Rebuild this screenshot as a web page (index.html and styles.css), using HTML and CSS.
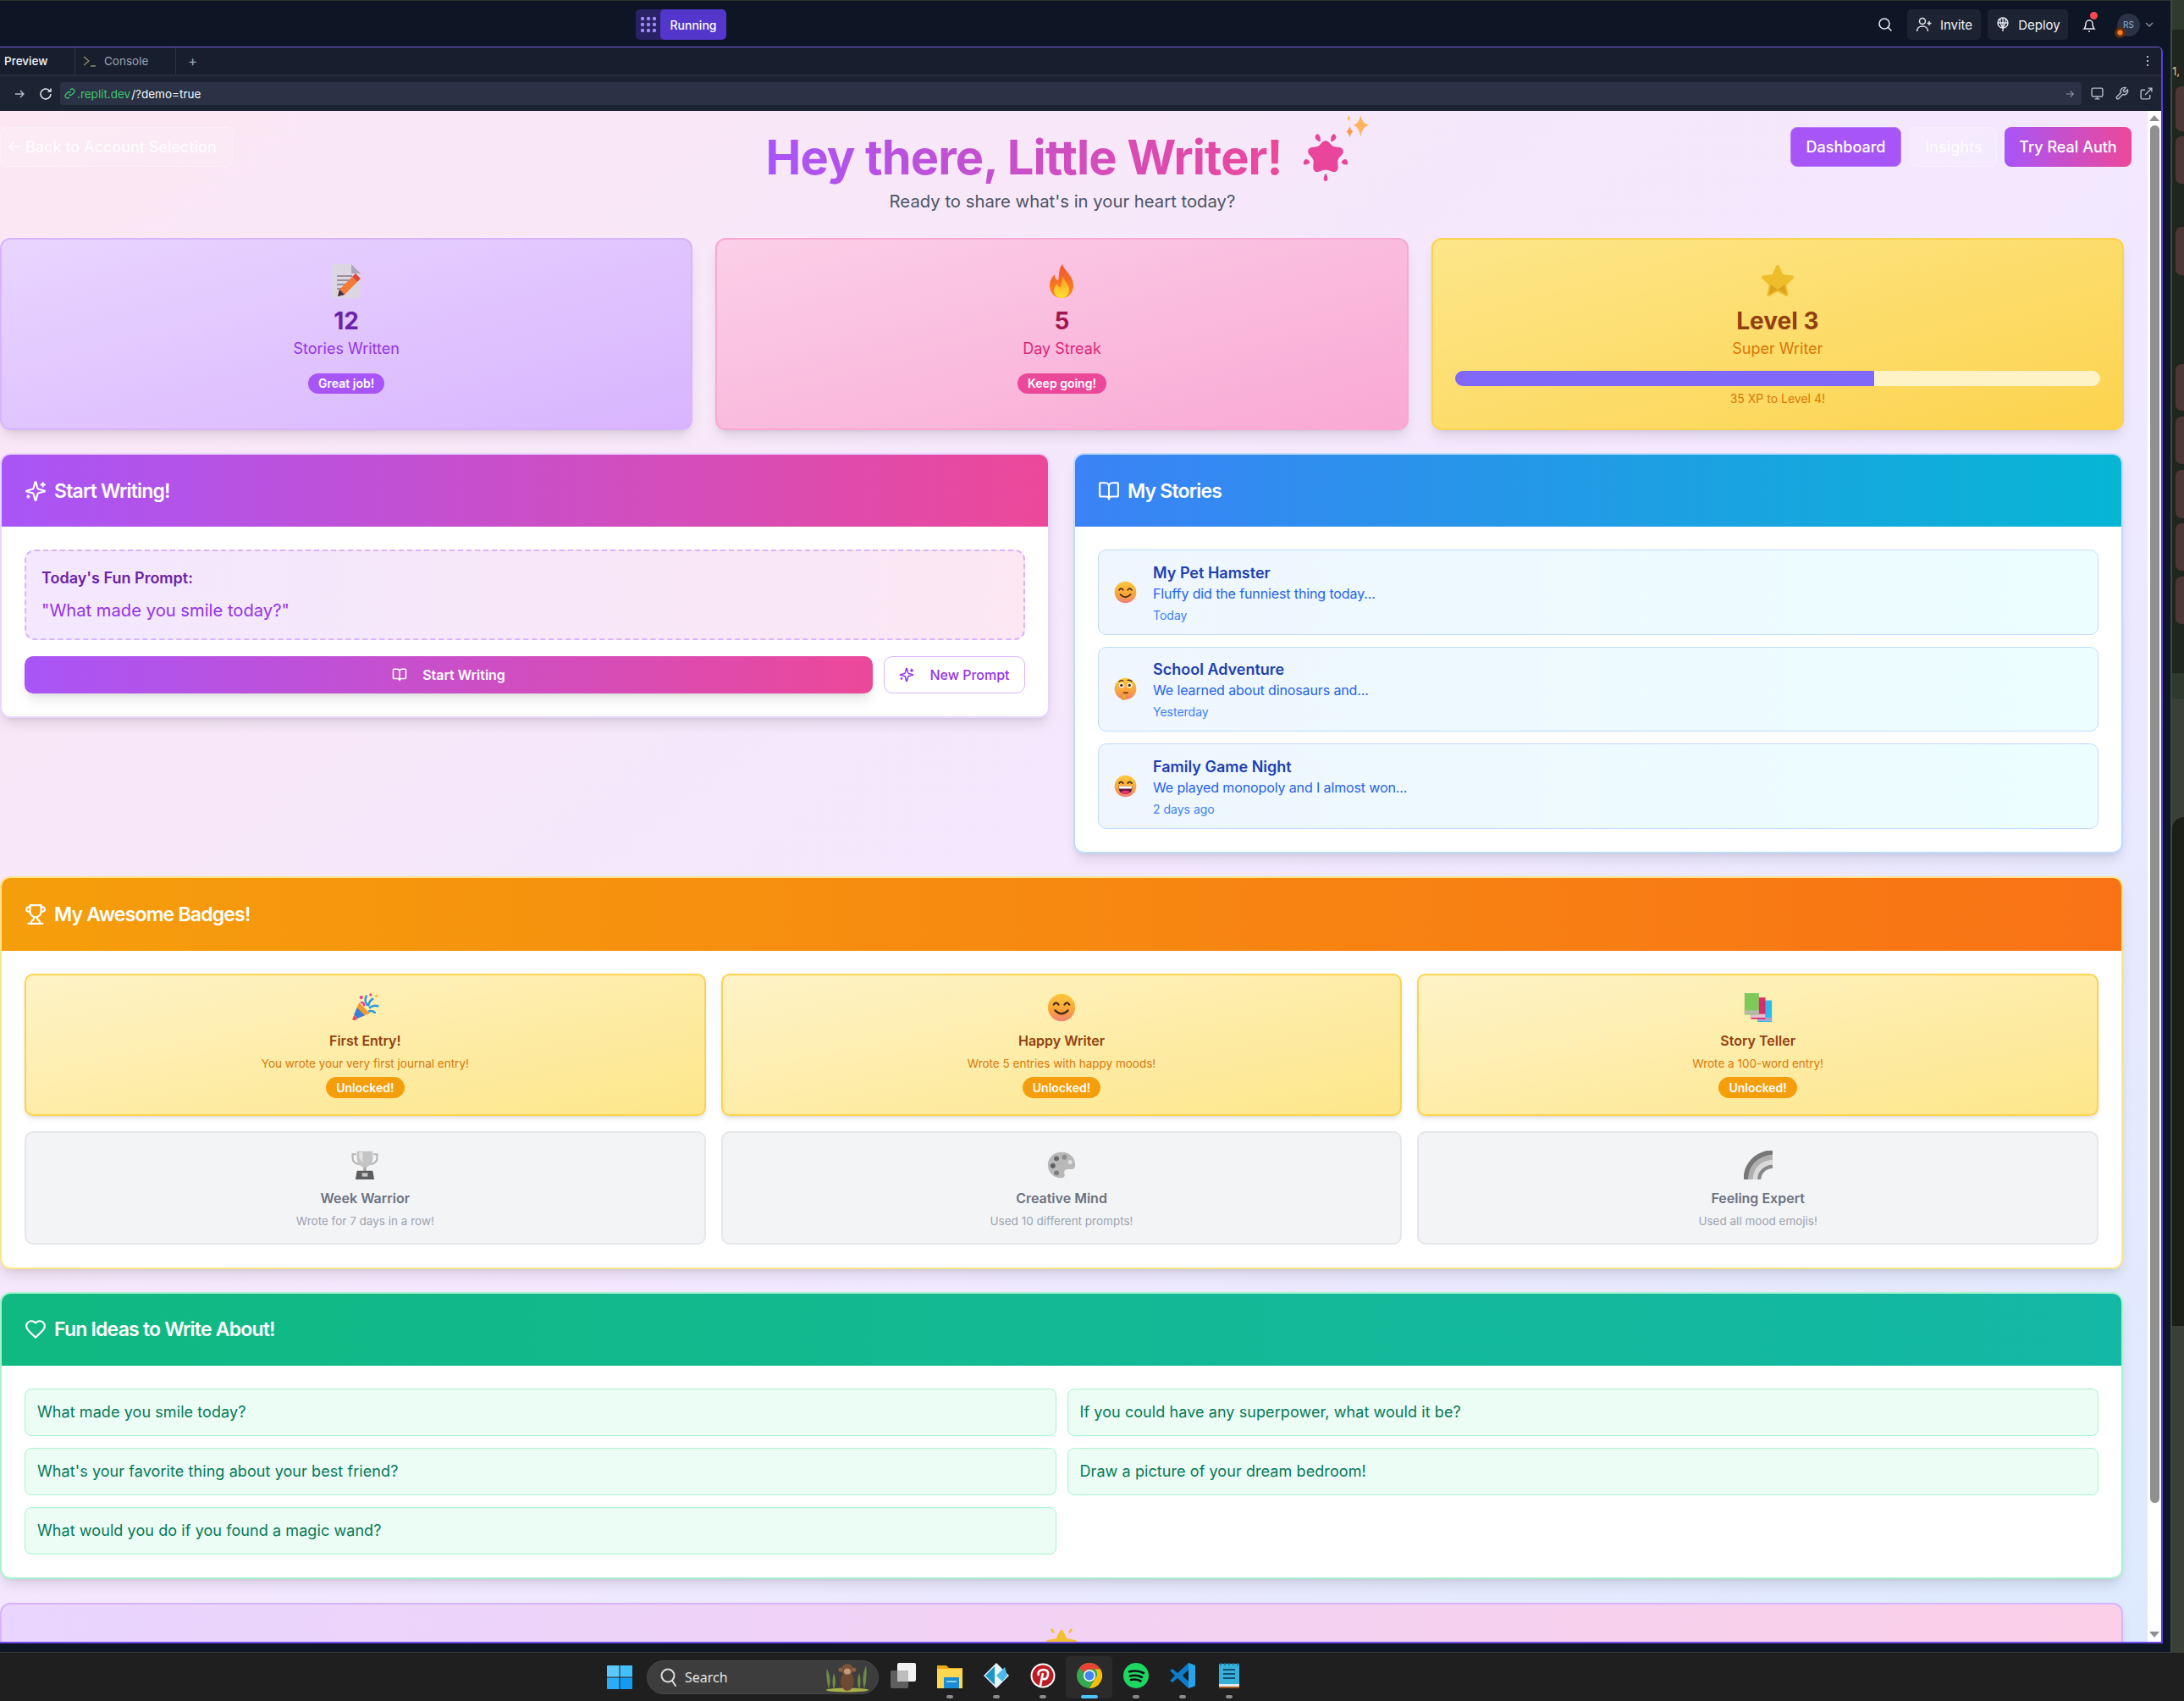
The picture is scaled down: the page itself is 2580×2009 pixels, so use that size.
FILE: index.html
```html
<!DOCTYPE html>
<html lang="en">
<head>
  <meta charset="UTF-8">
  <title>Little Writer</title>
  <link rel="stylesheet" href="styles.css">
</head>
<body>
  <svg class="defs" width="0" height="0">
    <defs>
      <linearGradient id="faceFill" x1="0" y1="0" x2="0" y2="1">
        <stop offset="0" stop-color="#fcc93c"/>
        <stop offset="0.65" stop-color="#f9a13a"/>
        <stop offset="1" stop-color="#f0807a"/>
      </linearGradient>
      <linearGradient id="flameFill" x1="0" y1="0" x2="0" y2="1">
        <stop offset="0" stop-color="#f0562c"/>
        <stop offset="1" stop-color="#fb8a1e"/>
      </linearGradient>
      <linearGradient id="flameCore" x1="0" y1="0" x2="0" y2="1">
        <stop offset="0" stop-color="#fb9a22"/>
        <stop offset="1" stop-color="#ffe236"/>
      </linearGradient>
      <symbol id="e-smile" viewBox="0 0 40 40">
        <circle cx="20" cy="20" r="19" fill="url(#faceFill)"/>
        <path d="M9 16q3.5-5 7 0M24 16q3.5-5 7 0M11 24q9 9 18 0" fill="none" stroke="#4b2a1a" stroke-width="2.6" stroke-linecap="round"/>
      </symbol>
      <symbol id="e-think" viewBox="0 0 40 40">
        <circle cx="20" cy="20" r="19" fill="url(#faceFill)"/>
        <circle cx="13" cy="14" r="4.4" fill="#fff"/><circle cx="27" cy="14" r="4.4" fill="#fff"/>
        <circle cx="13" cy="14" r="2.4" fill="#3a2414"/><circle cx="27" cy="14" r="2.4" fill="#3a2414"/>
        <path d="M9 7q4-2.500 7-1M24 5q4-1 7 2M17 27h7" fill="none" stroke="#4b2a1a" stroke-width="2" stroke-linecap="round"/>
        <path d="M14 39q-3-7 1-10l5-1q3 3 2 6l-3 5z" fill="#f2a33a" stroke="#d97f28"/>
      </symbol>
      <symbol id="e-grin" viewBox="0 0 40 40">
        <circle cx="20" cy="20" r="19" fill="url(#faceFill)"/>
        <path d="M9 15q3.500-5 7 0M24 15q3.500-5 7 0" fill="none" stroke="#4b2a1a" stroke-width="2.6" stroke-linecap="round"/>
        <path d="M8 20h24q0 14-12 14T8 20z" fill="#5b1a4a"/>
        <path d="M8.500 20h23q0 3-1 4.500h-21q-1-1.500-1-4.500z" fill="#fff"/>
        <path d="M12 30q8-5 16 0-3 4-8 4t-8-4z" fill="#e8306e"/>
      </symbol>
      <symbol id="e-trophy" viewBox="0 0 40 40">
        <path d="M8 5H3v5q0 7 9 9M32 5h5v5q0 7-9 9" fill="none" stroke="#b5b5b5" stroke-width="2.500"/>
        <path d="M9 1h22v10q0 10-11 13Q9 21 9 11z" fill="#c4c4c4"/>
        <path d="M12 2h5v14q-5-3-5-8z" fill="#e3e3e3"/>
        <rect x="18" y="23" width="4" height="7" fill="#a8a8a8"/>
        <path d="M9 28h22l2 12H7z" fill="#5d5d5d"/>
        <rect x="16" y="31" width="8" height="5" fill="#c8c8c8"/>
      </symbol>
      <symbol id="e-palette" viewBox="0 0 40 40">
        <path d="M20 2C9 2 1 10 1 20c0 10 8 18 18 18 5 0 6-3 5-6-1-4 1-6 5-6h5c3 0 5-2 5-6C39 9 31 2 20 2z" fill="#b8b8b8"/>
        <circle cx="13" cy="11" r="3.500" fill="#666"/><circle cx="24" cy="9" r="3.500" fill="#8c8c8c"/>
        <circle cx="8" cy="21" r="3.500" fill="#5d5d5d"/><circle cx="32" cy="16" r="3" fill="#dedede"/>
        <circle cx="13" cy="31" r="3.500" fill="#7d7d7d"/>
      </symbol>
      <symbol id="e-rainbow" viewBox="0 0 40 40">
        <path d="M3 40C3 20 16 5 40 2" fill="none" stroke="#777" stroke-width="7"/>
        <path d="M9.500 40C9.500 24 20 11 40 9" fill="none" stroke="#b0b0b0" stroke-width="7"/>
        <path d="M16 40C16 28 24 17 40 16" fill="none" stroke="#d9d9d9" stroke-width="6"/>
        <path d="M21.500 40C21.500 31 28 23 40 22" fill="none" stroke="#888" stroke-width="5"/>
      </symbol>
      <symbol id="i-sparkles" viewBox="0 0 24 24">
        <path d="M9.900 15.500a2 2 0 0 0-1.400-1.400l-6.100-1.600a.5.5 0 0 1 0-1l6.100-1.600a2 2 0 0 0 1.400-1.400l1.600-6.100a.5.5 0 0 1 1 0l1.600 6.100a2 2 0 0 0 1.400 1.400l6.100 1.600a.5.5 0 0 1 0 1l-6.100 1.600a2 2 0 0 0-1.400 1.400l-1.600 6.100a.5.5 0 0 1-1 0z" fill="none" stroke="currentColor" stroke-width="2" stroke-linejoin="round"/>
        <path d="M20 3v4M22 5h-4M4 17v2M5 18H3" fill="none" stroke="currentColor" stroke-width="2" stroke-linecap="round"/>
      </symbol>
      <symbol id="i-book" viewBox="0 0 24 24">
        <path d="M12 7v14M3 18a1 1 0 0 1-1-1V4a1 1 0 0 1 1-1h5a4 4 0 0 1 4 4 4 4 0 0 1 4-4h5a1 1 0 0 1 1 1v13a1 1 0 0 1-1 1h-6a3 3 0 0 0-3 3 3 3 0 0 0-3-3z" fill="none" stroke="currentColor" stroke-width="2" stroke-linecap="round" stroke-linejoin="round"/>
      </symbol>
    </defs>
  </svg>

  <div class="screen">
    <div class="app">
      <header class="topbar">
        <div class="run-btn">
          <span class="run-icon">
            <svg width="20" height="20" viewBox="0 0 20 20" fill="#9d8cf5"><circle cx="3" cy="3" r="2.200"/><circle cx="10" cy="3" r="2.200"/><circle cx="17" cy="3" r="2.200"/><circle cx="3" cy="10" r="2.200"/><circle cx="10" cy="10" r="2.200"/><circle cx="17" cy="10" r="2.200"/><circle cx="3" cy="17" r="2.200"/><circle cx="10" cy="17" r="2.200"/><circle cx="17" cy="17" r="2.200"/></svg>
          </span>
          <span class="run-label">Running</span>
        </div>
        <div class="top-actions">
          <svg class="top-search" width="18" height="18" viewBox="0 0 18 18" fill="none" stroke="#e4e7ee" stroke-width="1.600"><circle cx="8" cy="8" r="6"/><path d="M12.500 12.500 16 16" stroke-linecap="round"/></svg>
          <div class="top-btn invite-btn">
            <svg width="20" height="18" viewBox="0 0 20 18" fill="none" stroke="#e4e7ee" stroke-width="1.500"><circle cx="8" cy="5" r="3.500"/><path d="M1.500 17c0-4 3-6 6.500-6s6.500 2 6.500 6M16 5v5M13.500 7.500h5"/></svg>
            <span>Invite</span>
          </div>
          <div class="top-btn deploy-btn">
            <svg width="18" height="18" viewBox="0 0 18 18" fill="none" stroke="#e4e7ee" stroke-width="1.400"><circle cx="9" cy="7" r="6"/><path d="M3 7h12M9 1v12M6 2q-1 5 3 11 4-6 3-11M9 13v4"/></svg>
            <span>Deploy</span>
          </div>
          <div class="bell">
            <svg width="18" height="20" viewBox="0 0 18 20" fill="none" stroke="#e4e7ee" stroke-width="1.500"><path d="M3 15q2-2 2-6a4 4 0 0 1 8 0q0 4 2 6zM8 18h2"/></svg>
            <span class="bell-dot"></span>
          </div>
          <div class="avatar">RS<span class="avatar-spark"></span></div>
          <svg class="chevron" width="10" height="6" viewBox="0 0 10 6" fill="none" stroke="#8c93a6" stroke-width="1.300"><path d="M1 1l4 4 4-4"/></svg>
        </div>
      </header>

      <div class="preview">
        <div class="tabs">
          <div class="tab tab-active">Preview</div>
          <div class="tab tab-console">
            <svg width="16" height="14" viewBox="0 0 16 14" fill="none" stroke="#8d8f6a" stroke-width="1.300"><path d="M1 2l6 5-6 5M9 13h6"/></svg>
            <span>Console</span>
          </div>
          <div class="tab-add">+</div>
          <div class="tab-more"><i></i><i></i><i></i></div>
        </div>
        <div class="urlbar">
          <svg class="nav-icon" width="14" height="14" viewBox="0 0 14 14" fill="none" stroke="#b6bcc9" stroke-width="1.400"><path d="M2 7h10M8 3l4 4-4 4"/></svg>
          <svg class="nav-icon" width="16" height="16" viewBox="0 0 16 16" fill="none" stroke="#e4e7ee" stroke-width="1.500"><path d="M14 8a6 6 0 1 1-2-4.500L14 5M14 1.500V5h-3.500"/></svg>
          <div class="url-field">
            <svg width="13" height="13" viewBox="0 0 24 24" fill="none" stroke="#3ec46d" stroke-width="2.500"><path d="M10 14a5 5 0 0 0 7 0l4-4a5 5 0 0 0-7-7l-1 1M14 10a5 5 0 0 0-7 0l-4 4a5 5 0 0 0 7 7l1-1"/></svg>
            <span class="url-host">.replit.dev</span><span class="url-path">/?demo=true</span>
            <svg class="url-go" width="12" height="12" viewBox="0 0 14 14" fill="none" stroke="#8c93a6" stroke-width="1.400"><path d="M2 7h10M8 3l4 4-4 4"/></svg>
          </div>
          <div class="url-tools">
            <svg width="17" height="17" viewBox="0 0 24 24" fill="none" stroke="#b6bcc9" stroke-width="2"><rect x="3" y="3" width="18" height="14" rx="2"/><path d="M12 17v4M8 21h8"/></svg>
            <svg width="17" height="17" viewBox="0 0 24 24" fill="none" stroke="#b6bcc9" stroke-width="2"><path d="M14.700 6.300a1 1 0 0 0 0 1.400l1.600 1.600a1 1 0 0 0 1.400 0l3.800-3.800a6 6 0 0 1-7.900 7.900l-6.900 6.900a2.100 2.100 0 0 1-3-3l6.900-6.900a6 6 0 0 1 7.900-7.900z"/></svg>
            <svg width="17" height="17" viewBox="0 0 24 24" fill="none" stroke="#b6bcc9" stroke-width="2"><path d="M18 14v5a2 2 0 0 1-2 2H5a2 2 0 0 1-2-2V8a2 2 0 0 1 2-2h5M15 3h6v6M10 14 21 3"/></svg>
          </div>
        </div>

        <div class="viewport">
          <main class="page">
            <section class="hero">
              <div class="hero-left"><button class="ghost-btn back-btn">← Back to Account Selection</button></div>
              <div class="hero-mid">
                <div class="hero-title">
                  <h1>Hey there, Little Writer!</h1>
                  <svg class="hero-splat" width="56" height="58" viewBox="0 0 54 56" fill="#e8459b">
                    <path d="M27 9C31 9 32 13 35 15 39 17 46 15 47 20 48 25 42 27 41 31 40 35 43 41 39 44 36 46 31 42 27 42 23 42 18 46 15 44 11 41 14 35 13 31 12 27 6 25 7 20 8 15 15 17 19 15 22 13 23 9 27 9z"/>
                    <path d="M18 1q4 3 3 9-5-1-6-5 0-3 3-4zM36 1q3 1 3 4-1 4-6 5-1-6 3-9zM4 30q4 0 5 4-3 3-7 2-1-4 2-6zM50 30q3 2 2 6-4 1-7-2 1-4 5-4zM27 46q3 4 2 8-2 2-4 0-1-4 2-8z"/>
                  </svg>
                  <svg class="hero-sparkle" width="30" height="30" viewBox="0 0 28 28">
                    <path d="M18 1q1.500 9 9 11-7.500 2-9 13-1.500-11-8-13 6.500-2 8-11z" fill="#fdb45c"/>
                    <path d="M6 13q1 4.500 4 6-3 1.500-4 7-1-5.500-4-7 3-1.500 4-6z" fill="#fb9a4b"/>
                    <path d="M5 1q.6 2.500 2 3.500-1.400 1-2 3.500-.6-2.500-2-3.500 1.400-1 2-3.500z" fill="#fcc34f"/>
                  </svg>
                </div>
                <p class="hero-sub">Ready to share what's in your heart today?</p>
              </div>
              <nav class="hero-right">
                <button class="solid-btn dash-btn">Dashboard</button>
                <button class="ghost-btn insights-btn">Insights</button>
                <button class="solid-btn auth-btn">Try Real Auth</button>
              </nav>
            </section>

            <section class="stats">
              <div class="stat stat-purple">
                <svg class="stat-emoji" width="40" height="40" viewBox="0 0 40 40">
                  <path d="M3 0h23l11 11v29H3z" fill="#dcd5e2"/><path d="M26 0l11 11H26z" fill="#aea6b8"/>
                  <path d="M9 14h18M9 19h16M9 24h12M9 29h9" stroke="#97919f" stroke-width="2"/>
                  <path d="M10 38l2-8 15-15 6 6-15 15z" fill="#f47a35"/><path d="M27 15l4-4 6 6-4 4z" fill="#e0483b"/><path d="M10 38l2-8 6 6z" fill="#3c3244"/>
                </svg>
                <div class="stat-num">12</div>
                <div class="stat-label">Stories Written</div>
                <span class="pill">Great job!</span>
              </div>
              <div class="stat stat-pink">
                <svg class="stat-emoji" width="40" height="40" viewBox="0 0 40 40">
                  <path d="M21 0c2 8 13 13 13 25 0 9-6 15-14 15S6 34 6 25c0-6 3-10 6-13 0 4 1 6 4 7 2-7 0-13 5-19z" fill="url(#flameFill)"/>
                  <path d="M22 15c1 5 7 8 7 15 0 6-4 10-9 10s-9-4-9-9c0-4 2-6 4-8 1 3 2 4 4 4 1-4 1-8 3-12z" fill="url(#flameCore)"/>
                </svg>
                <div class="stat-num">5</div>
                <div class="stat-label">Day Streak</div>
                <span class="pill">Keep going!</span>
              </div>
              <div class="stat stat-yellow">
                <svg class="stat-emoji" width="40" height="40" viewBox="0 0 40 40">
                  <path d="M20 3l5 11 12 1.500-9 8.500 2.500 12L20 30l-10.500 6L12 24l-9-8.500L15 14z" fill="#eebd2a" stroke="#eebd2a" stroke-width="4" stroke-linejoin="round"/>
                  <path d="M20 30l-10.500 6L12 24l8 6 8-6 2.500 12z" fill="#d9a31f"/>
                </svg>
                <div class="stat-num">Level 3</div>
                <div class="stat-label">Super Writer</div>
                <div class="xp-track"><div class="xp-fill" style="width: 65%"></div></div>
                <div class="xp-note">35 XP to Level 4!</div>
              </div>
            </section>

            <section class="columns">
              <article class="card card-write">
                <h2 class="card-head"><svg width="26" height="26"><use href="#i-sparkles"/></svg>Start Writing!</h2>
                <div class="card-body">
                  <div class="prompt-box">
                    <div class="prompt-title">Today's Fun Prompt:</div>
                    <div class="prompt-text">"What made you smile today?"</div>
                  </div>
                  <div class="write-actions">
                    <button class="start-btn"><svg width="18" height="18"><use href="#i-book"/></svg>Start Writing</button>
                    <button class="new-btn"><svg width="18" height="18"><use href="#i-sparkles"/></svg>New Prompt</button>
                  </div>
                </div>
              </article>

              <article class="card card-stories">
                <h2 class="card-head"><svg width="26" height="26"><use href="#i-book"/></svg>My Stories</h2>
                <div class="card-body story-list">
                  <div class="story">
                    <svg class="story-emoji" width="27" height="27"><use href="#e-smile"/></svg>
                    <div>
                      <div class="story-title">My Pet Hamster</div>
                      <div class="story-text">Fluffy did the funniest thing today...</div>
                      <div class="story-date">Today</div>
                    </div>
                  </div>
                  <div class="story">
                    <svg class="story-emoji" width="27" height="27"><use href="#e-think"/></svg>
                    <div>
                      <div class="story-title">School Adventure</div>
                      <div class="story-text">We learned about dinosaurs and...</div>
                      <div class="story-date">Yesterday</div>
                    </div>
                  </div>
                  <div class="story">
                    <svg class="story-emoji" width="27" height="27"><use href="#e-grin"/></svg>
                    <div>
                      <div class="story-title">Family Game Night</div>
                      <div class="story-text">We played monopoly and I almost won...</div>
                      <div class="story-date">2 days ago</div>
                    </div>
                  </div>
                </div>
              </article>
            </section>

            <article class="card card-badges">
              <h2 class="card-head">
                <svg width="26" height="26" viewBox="0 0 24 24" fill="none" stroke="currentColor" stroke-width="2" stroke-linecap="round" stroke-linejoin="round"><path d="M6 9H4.500a2.500 2.500 0 0 1 0-5H6M18 9h1.500a2.500 2.500 0 0 0 0-5H18M4 22h16M10 14.700V17c0 .6-.5 1-1 1.200-1.200.5-2 2-2 3.800M14 14.700V17c0 .6.500 1 1 1.200 1.200.5 2 2 2 3.800M18 2H6v7a6 6 0 0 0 12 0z"/></svg>
                My Awesome Badges!
              </h2>
              <div class="card-body badge-grid">
                <div class="badge">
                  <svg class="badge-emoji" width="34" height="34" viewBox="0 0 40 40">
                    <path d="M2 38l10-25 15 15z" fill="#f59a2e"/><path d="M5 30l4-10 11 11-10 4z" fill="#3b7fd9"/><path d="M3 36l2-5 5 5-5 2z" fill="#e2486e"/>
                    <path d="M22 4q-3 7 1 12M31 8q-5 3-6 9M38 18q-6-2-11 2M34 27q-3-3-8-2" fill="none" stroke="#2c9ae8" stroke-width="3" stroke-linecap="round"/>
                    <circle cx="15" cy="6" r="2.500" fill="#ef3f8e"/><circle cx="36" cy="4" r="2" fill="#f4c534"/><circle cx="28" cy="2" r="1.800" fill="#ef3f8e"/><path d="M14 13q5-1 5 5" fill="none" stroke="#ef3f8e" stroke-width="3"/>
                  </svg>
                  <div class="badge-title">First Entry!</div>
                  <div class="badge-text">You wrote your very first journal entry!</div>
                  <span class="unlocked">Unlocked!</span>
                </div>
                <div class="badge">
                  <svg class="badge-emoji" width="34" height="34"><use href="#e-smile"/></svg>
                  <div class="badge-title">Happy Writer</div>
                  <div class="badge-text">Wrote 5 entries with happy moods!</div>
                  <span class="unlocked">Unlocked!</span>
                </div>
                <div class="badge">
                  <svg class="badge-emoji" width="34" height="34" viewBox="0 0 40 40">
                    <rect x="19" y="10" width="20" height="30" fill="#2fb8ea"/><rect x="19" y="34" width="20" height="5" fill="#a2a6d8"/>
                    <rect x="10" y="6" width="20" height="30" fill="#d92c6c"/><rect x="10" y="29" width="20" height="5" fill="#e8c0d4"/>
                    <rect x="1" y="0" width="20" height="30" fill="#7fc95a"/><rect x="1" y="24" width="20" height="5" fill="#b8b8ad"/>
                  </svg>
                  <div class="badge-title">Story Teller</div>
                  <div class="badge-text">Wrote a 100-word entry!</div>
                  <span class="unlocked">Unlocked!</span>
                </div>
                <div class="badge badge-locked">
                  <svg class="badge-emoji" width="34" height="34"><use href="#e-trophy"/></svg>
                  <div class="badge-title">Week Warrior</div>
                  <div class="badge-text">Wrote for 7 days in a row!</div>
                </div>
                <div class="badge badge-locked">
                  <svg class="badge-emoji" width="34" height="34"><use href="#e-palette"/></svg>
                  <div class="badge-title">Creative Mind</div>
                  <div class="badge-text">Used 10 different prompts!</div>
                </div>
                <div class="badge badge-locked">
                  <svg class="badge-emoji" width="34" height="34"><use href="#e-rainbow"/></svg>
                  <div class="badge-title">Feeling Expert</div>
                  <div class="badge-text">Used all mood emojis!</div>
                </div>
              </div>
            </article>

            <article class="card card-ideas">
              <h2 class="card-head">
                <svg width="26" height="26" viewBox="0 0 24 24" fill="none" stroke="currentColor" stroke-width="2" stroke-linejoin="round"><path d="M19 14c1.500-1.500 3-3.200 3-5.500A5.500 5.500 0 0 0 16.500 3c-1.800 0-3 .5-4.500 2-1.500-1.500-2.700-2-4.500-2A5.500 5.500 0 0 0 2 8.500c0 2.300 1.500 4 3 5.500l7 7z"/></svg>
                Fun Ideas to Write About!
              </h2>
              <div class="card-body idea-grid">
                <div class="idea">What made you smile today?</div>
                <div class="idea">If you could have any superpower, what would it be?</div>
                <div class="idea">What's your favorite thing about your best friend?</div>
                <div class="idea">Draw a picture of your dream bedroom!</div>
                <div class="idea">What would you do if you found a magic wand?</div>
              </div>
            </article>

            <article class="card card-next">
              <svg class="next-star" width="40" height="40" viewBox="0 0 40 40" fill="#f2c02e">
                <path d="M20 6l5 10 11 2-8 8 2 12-10-5-10 5 2-12-8-8 11-2z" stroke="#f2c02e" stroke-width="4" stroke-linejoin="round"/>
                <path d="M9 2l3 5-2 1-3-4zM31 2l-3 5 2 1 3-4z"/>
              </svg>
            </article>
          </main>

          <div class="scrollbar">
            <span class="arrow-up"></span>
            <div class="scroll-track"><div class="scroll-thumb"></div></div>
            <span class="arrow-down"></span>
          </div>
        </div>
      </div>
      <div class="under-bar"></div>
    </div>

    <aside class="side-sliver">
      <div class="sliver-top"></div>
      <div class="sliver-tabs"><span class="sliver-num">1,</span></div>
      <div class="sliver-diff">
        <span class="blob blob-a"></span>
        <span class="blob blob-b"></span>
        <span class="blob blob-c"></span>
        <span class="blob blob-d"></span>
        <span class="blob blob-e"></span>
        <span class="blob blob-f"></span>
        <span class="blob blob-g"></span>
        <span class="blob blob-h"></span>
      </div>
      <div class="sliver-band"></div>
      <div class="sliver-panel"><div class="sliver-dark"></div></div>
    </aside>
  </div>

  <footer class="taskbar">
    <svg class="task-win" width="30" height="30" viewBox="0 0 30 30">
      <path d="M1 1h13.500v13.500H0V2a1 1 0 0 1 1-1z" fill="#5cc8fb"/><path d="M15.500 1H29a1 1 0 0 1 1 1v12.500H15.500z" fill="#43c0fb"/>
      <path d="M0 15.500h14.500V29H1a1 1 0 0 1-1-1z" fill="#2bacf6"/><path d="M15.500 15.500H30V28a1 1 0 0 1-1 1H15.500z" fill="#139bf3"/>
    </svg>
    <div class="task-search">
      <svg width="22" height="24" viewBox="0 0 22 24" fill="none" stroke="#dcdcdc" stroke-width="2"><circle cx="10" cy="10" r="7.500"/><path d="M15 16l4 6" stroke-linecap="round"/></svg>
      <span>Search</span>
      <svg class="task-monkey" width="60" height="36" viewBox="0 0 60 36">
        <ellipse cx="30" cy="33" rx="25" ry="2.500" fill="#a8b04a"/>
        <path d="M8 32q-4-14-2-24 6 12 2 24zM14 33q-3-10 0-20 4 10 0 20zM50 32q4-14 2-28-6 14-2 28zM44 33q3-10 0-20-4 10 0 20z" fill="#6f8c45"/>
        <ellipse cx="30" cy="23" rx="8" ry="11" fill="#6e4a32"/>
        <circle cx="30" cy="9" r="7" fill="#7a5238"/><circle cx="22" cy="9" r="2.500" fill="#8a6146"/><circle cx="38" cy="9" r="2.500" fill="#8a6146"/>
        <ellipse cx="30" cy="11" rx="4" ry="3.500" fill="#c49a7c"/>
      </svg>
    </div>
    <div class="task-apps">
      <div class="task-app">
        <svg width="30" height="30" viewBox="0 0 30 30"><rect x="0" y="9" width="21" height="21" rx="2" fill="#5e5e5e"/><rect x="8" y="0" width="22" height="22" rx="2" fill="#f3f3f3"/><rect x="8" y="9" width="13" height="13" fill="#bdbdbd"/></svg>
      </div>
      <div class="task-app has-dot">
        <svg width="30" height="30" viewBox="0 0 30 30"><path d="M0 3h11l3 3h16v24H0z" fill="#e8a913"/><rect x="0" y="7" width="30" height="23" fill="#fbd651"/><rect x="8" y="17" width="18" height="13" rx="1" fill="#1a8cd8"/><rect x="11" y="21" width="12" height="2" fill="#8fd0f5"/></svg>
      </div>
      <div class="task-app has-dot">
        <svg width="30" height="30" viewBox="0 0 30 30"><path d="M15 0 30 15 15 30 0 15z" fill="#e8f6fb"/><path d="M13 4v22L2 15z" fill="#1f95c8"/><path d="M15 15 25 5l3 10-6 7z" fill="#4cb9e6"/></svg>
      </div>
      <div class="task-app has-dot">
        <svg width="30" height="30" viewBox="0 0 30 30"><circle cx="15" cy="15" r="14.500" fill="#fff"/><circle cx="15" cy="15" r="12.500" fill="#bd1c24"/><path d="M12 27l3-15M10 15q-2-6 5-7 7 0 6 6-1 6-5 5-2-.5-2-2" fill="none" stroke="#fff" stroke-width="2.600"/></svg>
      </div>
      <div class="task-app is-active">
        <svg width="30" height="30" viewBox="0 0 30 30"><circle cx="15" cy="15" r="15" fill="#34a853"/><path d="M15 0a15 15 0 0 1 13 7.500H15A7.500 7.500 0 0 0 8 12L3.500 5.500A15 15 0 0 1 15 0z" fill="#ea4335"/><path d="M28 7.500A15 15 0 0 1 15 30l6.500-11a7.500 7.500 0 0 0 0-11.500z" fill="#fbbc05"/><circle cx="15" cy="15" r="7" fill="#fff"/><circle cx="15" cy="15" r="5.500" fill="#4285f4"/></svg>
      </div>
      <div class="task-app has-dot">
        <svg width="30" height="30" viewBox="0 0 30 30"><circle cx="15" cy="15" r="15" fill="#1ed760"/><path d="M7 10.500q9-2.500 17 1.500M8 15.500q7.500-2 14 1.500M9 20q6-1.500 11.500 1.500" fill="none" stroke="#111" stroke-width="2.600" stroke-linecap="round"/></svg>
      </div>
      <div class="task-app has-dot">
        <svg width="30" height="30" viewBox="0 0 30 30"><path d="M22 0l8 3v24l-8 3-13-12-6 5-3-2 6-6-6-6 3-2 6 5z" fill="#0d7cc9"/><path d="M22 0l8 3v24l-8 3z" fill="#26a3ea"/><path d="M22 8l-7 7 7 7z" fill="#1f1f1f"/></svg>
      </div>
      <div class="task-app has-dot">
        <svg width="30" height="30" viewBox="0 0 30 30"><rect x="3" y="1" width="24" height="28" rx="1" fill="#37b0d9"/><rect x="3" y="25" width="24" height="3" fill="#e8e8e8"/><rect x="3" y="28" width="24" height="2" fill="#9c5420"/><path d="M8 8h14M8 13h14M8 18h14" stroke="#134e72" stroke-width="2"/><path d="M5 0v3M10 0v3M15 0v3M20 0v3M25 0v3" stroke="#1c6e92" stroke-width="1.500"/></svg>
      </div>
    </div>
  </footer>
</body>
</html>
```

FILE: styles.css
```css
* {
  box-sizing: border-box;
}

html, body {
  margin: 0;
  height: 100%;
  overflow: hidden;
}

body {
  display: flex;
  flex-direction: column;
  background: #0e1525;
  font-family: Inter, "Noto Sans", sans-serif;
  color: #1f2937;
}

button {
  font-family: inherit;
}

.defs {
  position: absolute;
}

.screen {
  display: flex;
  height: 1951px;
}

.app {
  display: flex;
  flex-direction: column;
  width: 2564px;
  padding-top: 2px;
  background: #0e1525;
  border-top: 1px solid #2c342a;
}

/* replit top bar */
.topbar {
  display: flex;
  align-items: center;
  height: 52px;
  padding: 0 20px 0 751px;
  flex-shrink: 0;
}

.run-btn {
  display: flex;
  height: 36px;
  width: 107px;
  border-radius: 5px;
  overflow: hidden;
  background: #2a2266;
  color: #fff;
  font-size: 14px;
  font-weight: 500;
}

.run-icon {
  display: flex;
  align-items: center;
  justify-content: center;
  width: 29px;
}

.run-label {
  display: flex;
  align-items: center;
  justify-content: center;
  flex: 1;
  background: #5336cc;
  border-radius: 5px;
}

.top-actions {
  display: flex;
  align-items: center;
  margin-left: auto;
  color: #f0f1f4;
  font-size: 15px;
}

.top-search {
  margin-right: 17px;
}

.top-btn {
  display: flex;
  align-items: center;
  justify-content: center;
  gap: 9px;
  height: 36px;
  border-radius: 5px;
  background: #1c2333;
}

.invite-btn {
  width: 87px;
  margin-right: 8px;
}

.deploy-btn {
  width: 95px;
  margin-right: 16px;
}

.bell {
  position: relative;
  display: flex;
  margin-right: 24px;
}

.bell-dot {
  position: absolute;
  top: -5px;
  right: -1px;
  width: 9px;
  height: 9px;
  border-radius: 50%;
  background: #f5484f;
}

.avatar {
  position: relative;
  display: flex;
  align-items: center;
  justify-content: center;
  width: 27px;
  height: 27px;
  border-radius: 50%;
  background: #2b3245;
  color: #8fb4d8;
  font-size: 10px;
}

.avatar-spark {
  position: absolute;
  left: -3px;
  bottom: -2px;
  width: 13px;
  height: 13px;
  border-radius: 50%;
  background: radial-gradient(circle, #ff7a1a 0 25%, #5a2c10 45%);
}

.chevron {
  margin-left: 6px;
}

/* preview pane */
.preview {
  display: flex;
  flex-direction: column;
  height: 1886px;
  width: 2555px;
  flex-shrink: 0;
  overflow: hidden;
  border-top: 1px solid #7a5ad8;
  border-right: 2px solid #5a3fd6;
  border-bottom: 2px solid #6d4be8;
  border-top-right-radius: 6px;
}

.tabs {
  display: flex;
  align-items: stretch;
  height: 34px;
  flex-shrink: 0;
  background: #171f2f;
  border-bottom: 2px solid #262d3d;
  font-size: 13.500px;
}

.tab {
  display: flex;
  align-items: center;
  gap: 9px;
  border-right: 1px solid #2b3245;
}

.tab-active {
  width: 89px;
  padding-left: 5px;
  color: #f5f9fc;
  font-weight: 500;
}

.tab-console {
  width: 119px;
  padding-left: 9px;
  color: #9da2b0;
}

.tab-add {
  display: flex;
  align-items: center;
  margin-left: 14px;
  color: #9da2b0;
  font-size: 17px;
}

.tab-more {
  display: flex;
  flex-direction: column;
  justify-content: center;
  gap: 3px;
  margin-left: auto;
  margin-right: 15px;
}

.tab-more i {
  width: 2px;
  height: 2px;
  background: #b6bcc9;
}

.urlbar {
  display: flex;
  align-items: center;
  height: 41px;
  flex-shrink: 0;
  background: #1c2333;
  padding-left: 16px;
}

.nav-icon {
  margin-right: 16px;
}

.nav-icon + .nav-icon {
  margin-right: 9px;
}

.url-field {
  display: flex;
  align-items: center;
  gap: 1px;
  width: 2388px;
  height: 27px;
  padding: 0 8px 0 5px;
  border-radius: 4px;
  background: #2b3245;
  color: #f5f9fc;
  font-size: 13.500px;
}

.url-host {
  margin-left: 1px;
  color: #3ec46d;
}

.url-go {
  margin-left: auto;
}

.url-tools {
  display: flex;
  gap: 12px;
  margin-left: 10px;
}

.viewport {
  display: flex;
  flex: 1;
  min-height: 0;
  overflow: hidden;
}

.scrollbar {
  display: flex;
  flex-direction: column;
  align-items: center;
  width: 16px;
  padding: 5px 0;
  flex-shrink: 0;
  background: #fff;
}

.arrow-up, .arrow-down {
  width: 0;
  height: 0;
  border-left: 6px solid transparent;
  border-right: 6px solid transparent;
}

.arrow-up {
  border-bottom: 7px solid #8f8f8f;
}

.arrow-down {
  border-top: 7px solid #8f8f8f;
}

.scroll-track {
  flex: 1;
  width: 11px;
  padding-top: 5px;
}

.scroll-thumb {
  height: 1627px;
  border-radius: 6px;
  background: #8f8f8f;
}

/* page content */
.page {
  flex: 1;
  min-width: 0;
  height: 1965px;
  padding: 19px 0 0;
  background: linear-gradient(to bottom right, #fce7f3, #f3e8ff 50%, #dbeafe);
}

.hero {
  display: grid;
  grid-template-columns: 1fr auto 1fr;
  width: 2510px;
  height: 131px;
}

.ghost-btn, .solid-btn {
  height: 47px;
  border-radius: 8px;
  border: 1px solid rgba(255, 255, 255, 0.25);
  font-size: 18px;
  font-weight: 500;
  color: #fff;
  cursor: pointer;
}

.ghost-btn {
  background: rgba(255, 255, 255, 0.12);
  color: rgba(255, 255, 255, 0.85);
}

.back-btn {
  width: 275px;
  padding: 0 0 0 7px;
  text-align: left;
  font-size: 18px;
}

.hero-mid {
  text-align: center;
}

.hero-title {
  position: relative;
  display: flex;
  align-items: center;
  justify-content: center;
  gap: 23px;
  margin: -1px 0 0 -12px;
  height: 74px;
}

.hero-title h1 {
  margin: 0;
  font-size: 56px;
  line-height: 74px;
  font-weight: 700;
  letter-spacing: -0.9px;
  white-space: nowrap;
  background: linear-gradient(to right, #a855f7, #ec4899);
  -webkit-background-clip: text;
  background-clip: text;
  color: transparent;
}

.hero-splat {
  flex-shrink: 0;
}

.hero-sparkle {
  position: absolute;
  top: -14px;
  right: -24px;
}

.hero-sub {
  margin: 1px 0 0;
  font-size: 20.300px;
  line-height: 28px;
  color: #4b5563;
}

.hero-right {
  display: flex;
  justify-content: flex-end;
  gap: 9px;
  margin-right: -8px;
}

.solid-btn {
  width: 131px;
  background: #a855f7;
  border-color: #b97bf8;
}

.dash-btn {
  margin-right: 2px;
}

.insights-btn {
  width: 102px;
}

.auth-btn {
  width: 150px;
  background: linear-gradient(to right, #a855f7, #ec4899);
  border: 0;
}

.stats {
  display: grid;
  grid-template-columns: repeat(3, 1fr);
  gap: 27px;
  width: 2509px;
}

.stat {
  display: flex;
  flex-direction: column;
  align-items: center;
  height: 227px;
  padding-top: 29px;
  border-radius: 12px;
  border: 2px solid;
  box-shadow: 0 10px 15px -3px rgba(0, 0, 0, 0.1), 0 4px 6px -4px rgba(0, 0, 0, 0.1);
}

.stat-purple {
  background: linear-gradient(to bottom right, #e9d5ff, #d8b4fe);
  border-color: #d8b4fe;
  color: #6b21a8;
}

.stat-pink {
  background: linear-gradient(to bottom right, #fbcfe8, #f9a8d4);
  border-color: #f9a8d4;
  color: #9d174d;
}

.stat-yellow {
  background: linear-gradient(to bottom right, #fde68a, #fcd34d);
  border-color: #fcd34d;
  color: #92400e;
}

.stat-num {
  margin-top: 9px;
  font-size: 28px;
  line-height: 36px;
  font-weight: 700;
}

.stat-label {
  margin-top: 2px;
  font-size: 18px;
  line-height: 26px;
}

.stat-purple .stat-label { color: #9333ea; }
.stat-pink .stat-label { color: #db2777; }
.stat-yellow .stat-label { color: #d97706; }

.pill {
  margin-top: 16px;
  padding: 0 12px;
  height: 24px;
  line-height: 24px;
  border-radius: 12px;
  color: #fff;
  font-size: 14px;
  font-weight: 600;
}

.stat-purple .pill { background: #a855f7; }
.stat-pink .pill { background: #ec4899; }

.xp-track {
  width: 762px;
  height: 18px;
  margin-top: 13px;
  border-radius: 9px;
  overflow: hidden;
  background: #fef3c7;
}

.xp-fill {
  height: 100%;
  background: #7f68fa;
}

.xp-note {
  margin-top: 5px;
  font-size: 14px;
  line-height: 20px;
  color: #d97706;
}

.columns {
  display: flex;
  align-items: flex-start;
  gap: 28px;
  width: 2508px;
  margin-top: 27px;
}

.card {
  border-radius: 12px;
  border: 2px solid;
  overflow: hidden;
  background: #fff;
  box-shadow: 0 10px 15px -3px rgba(0, 0, 0, 0.1), 0 4px 6px -4px rgba(0, 0, 0, 0.1);
}

.card-head {
  display: flex;
  align-items: center;
  gap: 9px;
  height: 85px;
  margin: 0;
  padding: 0 27px;
  font-size: 23px;
  font-weight: 600;
  letter-spacing: -0.8px;
  color: #fff;
}

.card-body {
  padding: 27px;
}

.card-write {
  width: 1240px;
  border-color: #e9d5ff;
}

.card-write .card-head {
  background: linear-gradient(to right, #a855f7, #ec4899);
}

.card-stories {
  width: 1240px;
  border-color: #bfdbfe;
}

.card-stories .card-head {
  background: linear-gradient(to right, #3b82f6, #06b6d4);
}

.prompt-box {
  height: 107px;
  padding: 20px 18px;
  border: 2px dashed #d8b4fe;
  border-radius: 12px;
  background: linear-gradient(to right, #f3e8ff, #fce7f3);
}

.prompt-title {
  font-size: 18px;
  line-height: 24px;
  font-weight: 600;
  color: #6b21a8;
}

.prompt-text {
  margin-top: 12px;
  font-size: 20.200px;
  line-height: 28px;
  color: #9333ea;
}

.write-actions {
  display: flex;
  gap: 13px;
  margin-top: 19px;
}

.start-btn, .new-btn {
  display: flex;
  align-items: center;
  justify-content: center;
  height: 44px;
  border-radius: 10px;
  font-size: 16px;
  cursor: pointer;
}

.start-btn {
  flex: 1;
  gap: 18px;
  border: 0;
  color: #fff;
  font-weight: 600;
  background: linear-gradient(to right, #a855f7, #ec4899);
  box-shadow: 0 10px 15px -3px rgba(0, 0, 0, 0.1), 0 4px 6px -4px rgba(0, 0, 0, 0.1);
}

.new-btn {
  gap: 18px;
  width: 167px;
  padding: 0;
  border: 1px solid #d8b4fe;
  background: #fff;
  color: #9333ea;
  font-weight: 500;
}

.story-list {
  display: flex;
  flex-direction: column;
  gap: 14px;
}

.story {
  display: flex;
  align-items: center;
  gap: 19px;
  height: 100.500px;
  padding: 3px 0 0 18px;
  border: 1px solid #bfdbfe;
  border-radius: 10px;
  background: linear-gradient(to right, #eff6ff, #ecfeff);
}

.story-emoji {
  flex-shrink: 0;
  margin-top: -3px;
}

.story-title {
  font-size: 18px;
  line-height: 24px;
  font-weight: 600;
  color: #1e40af;
}

.story-text {
  font-size: 16px;
  line-height: 24px;
  letter-spacing: -0.12px;
  color: #2563eb;
}

.story-date {
  margin-top: 4px;
  font-size: 14px;
  line-height: 20px;
  color: #3b82f6;
}

.card-badges {
  width: 2508px;
  margin-top: 27px;
  border-color: #fde68a;
}

.card-badges .card-head {
  height: 86px;
  background: linear-gradient(to right, #f59e0b, #f97316);
}

.badge-grid {
  display: grid;
  grid-template-columns: repeat(3, 1fr);
  gap: 18px;
}

.badge {
  display: flex;
  flex-direction: column;
  align-items: center;
  height: 168px;
  padding-top: 21px;
  border: 2px solid #fcd34d;
  border-radius: 10px;
  background: linear-gradient(to bottom right, #fef3c7, #fde68a);
  box-shadow: 0 4px 6px -1px rgba(0, 0, 0, 0.1), 0 2px 4px -2px rgba(0, 0, 0, 0.1);
}

.badge-locked {
  height: 134px;
  border-color: #e5e7eb;
  background: #f3f4f6;
  box-shadow: none;
}

.badge-emoji {
  flex-shrink: 0;
}

.badge-title {
  margin-top: 11px;
  font-size: 16px;
  line-height: 22px;
  font-weight: 600;
  color: #92400e;
}

.badge-text {
  margin-top: 6px;
  font-size: 13.500px;
  line-height: 20px;
  color: #d97706;
}

.badge-locked .badge-title {
  color: #6b7280;
}

.badge-locked .badge-text {
  color: #9ca3af;
}

.unlocked {
  margin-top: 6px;
  padding: 0 12px;
  height: 25px;
  line-height: 25px;
  border-radius: 13px;
  background: #f59e0b;
  color: #fff;
  font-size: 14px;
  font-weight: 600;
}

.card-ideas {
  width: 2508px;
  margin-top: 27px;
  border-color: #a7f3d0;
}

.card-ideas .card-head {
  background: linear-gradient(to right, #10b981, #14b8a6);
}

.idea-grid {
  display: grid;
  grid-template-columns: 1fr 1fr;
  gap: 14px 13px;
}

.idea {
  display: flex;
  align-items: center;
  height: 56px;
  padding: 0 14px;
  border: 1px solid #a7f3d0;
  border-radius: 8px;
  background: #ecfdf5;
  color: #047857;
  font-size: 18px;
  font-weight: 400;
  letter-spacing: 0.08px;
}

.card-next {
  display: flex;
  justify-content: center;
  width: 2508px;
  height: 150px;
  margin-top: 28px;
  padding-top: 26px;
  border-color: #d8b4fe;
  background: linear-gradient(to right, #e9d5ff, #fbcfe8);
}

.under-bar {
  flex: 1;
}

/* neighbouring window at the right edge */
.side-sliver {
  display: flex;
  flex-direction: column;
  width: 16px;
  border-left: 2px solid #3c4a3a;
  background: #1e261f;
}

.sliver-top {
  height: 35px;
  background: #2e3b2e;
}

.sliver-tabs {
  height: 65px;
  padding-top: 40px;
  font-size: 13px;
  line-height: 18px;
  color: #e3c98a;
}

.sliver-num {
  display: block;
}

.sliver-diff {
  position: relative;
  height: 695px;
}

.blob {
  position: absolute;
  left: 4px;
  right: 0;
  border-radius: 7px 0 0 7px;
  background: #4d3636;
}

.blob-a { top: 2px; height: 53px; }
.blob-b { top: 61px; height: 56px; }
.blob-c { top: 168px; height: 57px; }
.blob-d { top: 330px; height: 55px; }
.blob-e { top: 392px; height: 56px; }
.blob-f { top: 455px; height: 57px; }
.blob-g { top: 518px; height: 56px; }
.blob-h { top: 581px; height: 56px; }

.sliver-band {
  height: 30px;
  background: #2d3a2d;
}

.sliver-panel {
  flex: 1;
  padding-top: 140px;
  background: #3a3f38;
}

.sliver-dark {
  height: 601px;
  border-top-left-radius: 28px;
  background: #1b1f18;
}

/* windows taskbar */
.taskbar {
  display: flex;
  align-items: center;
  height: 58px;
  flex-shrink: 0;
  padding-left: 717px;
  background: #1f1f1f;
  border-top: 1px solid #3b3b3b;
}

.task-win {
  flex-shrink: 0;
}

.task-search {
  display: flex;
  align-items: center;
  gap: 8px;
  width: 274px;
  height: 40px;
  margin-left: 17px;
  padding: 0 6px 0 14px;
  border-radius: 20px;
  background: #3d3d3d;
  border: 1px solid #4a4a4a;
  color: #e4e4e4;
  font-family: "Noto Sans", sans-serif;
  font-size: 16px;
}

.task-monkey {
  margin-left: auto;
}

.task-apps {
  display: flex;
  margin-left: 1px;
}

.task-app {
  position: relative;
  display: flex;
  align-items: center;
  justify-content: center;
  width: 55px;
  height: 50px;
  padding-bottom: 4px;
}

.has-dot::after, .is-active::after {
  content: "";
  position: absolute;
  bottom: 0;
  left: 50%;
  height: 4px;
  border-radius: 2px;
}

.has-dot::after {
  width: 8px;
  margin-left: -4px;
  background: #8a8a8a;
}

.is-active {
  background: #2b2b2b;
  border-radius: 5px;
}

.is-active::after {
  width: 20px;
  margin-left: -10px;
  background: #4cc2ff;
}
```
